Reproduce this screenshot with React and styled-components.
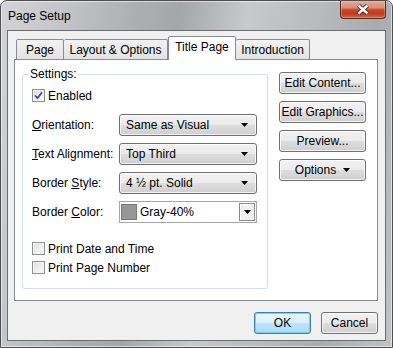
import React from "react";
import styled, { createGlobalStyle } from "styled-components";

const GlobalStyle = createGlobalStyle`
  html, body {
    margin: 0;
    padding: 0;
    background: #fff;
  }
  body {
    font-family: "Segoe UI", "Liberation Sans", Arial, sans-serif;
    font-size: 12px;
    color: #000;
  }
`;

const Window = styled.div`
  width: 393px;
  height: 348px;
  box-sizing: border-box;
  display: flex;
  flex-direction: column;
  padding: 0 6px 6px 6px;
  border: 1px solid #4e4e4e;
  border-radius: 7px 7px 0 0;
  box-shadow: inset 0 0 0 1px rgba(255, 255, 255, 0.55);
  background: linear-gradient(
    100deg,
    #d2d4d6 0%,
    #c3c5c8 14%,
    #adb0b3 30%,
    #a4a7aa 40%,
    #c7c9cb 55%,
    #b9bbbe 70%,
    #a9acaf 84%,
    #c0c2c4 100%
  );
`;

const TitleBar = styled.div`
  height: 29px;
  display: flex;
  justify-content: space-between;
  align-items: flex-start;
`;

const Title = styled.div`
  padding: 8px 0 0 1px;
  line-height: 14px;
  font-size: 12px;
  color: #000;
`;

const CloseButton = styled.div`
  width: 46px;
  height: 18px;
  margin-right: 0;
  box-sizing: border-box;
  display: flex;
  align-items: center;
  justify-content: center;
  border: 1px solid #5a2a22;
  border-top: none;
  border-radius: 0 0 4px 4px;
  background: linear-gradient(
    #e7a997 0%,
    #d88c78 40%,
    #c5472b 52%,
    #c23a1e 75%,
    #d3694c 100%
  );
  box-shadow: inset 0 0 0 1px rgba(255, 200, 180, 0.35);
`;

const Client = styled.div`
  flex: 1;
  display: flex;
  flex-direction: column;
  padding: 5px 7px 6px 6px;
  border: 1px solid #6e6e6e;
  background: #f0f0f0;
`;

const TabStrip = styled.div`
  height: 23px;
  display: flex;
  align-items: flex-end;
  padding-left: 2px;
`;

const Tab = styled.div`
  position: relative;
  z-index: ${(p) => (p.$active ? 2 : 1)};
  width: ${(p) => p.$width}px;
  height: ${(p) => (p.$active ? 24 : 20)}px;
  margin-bottom: ${(p) => (p.$active ? -1 : 0)}px;
  box-sizing: border-box;
  display: flex;
  align-items: center;
  justify-content: center;
  padding-bottom: ${(p) => (p.$active ? 3 : 0)}px;
  border: 1px solid #898c95;
  border-bottom: none;
  border-left-width: ${(p) => (p.$first || p.$active ? 1 : 0)}px;
  border-radius: 2px 2px 0 0;
  background: ${(p) =>
    p.$active ? "#fff" : "linear-gradient(#f2f2f2, #e3e3e3)"};
  white-space: nowrap;
`;

const Panel = styled.div`
  flex: 1;
  display: flex;
  align-items: flex-start;
  gap: 11px;
  padding: 7px 10px 0 7px;
  border: 1px solid #898c95;
  background: #fff;
`;

const Group = styled.fieldset`
  margin: 0;
  width: 246px;
  box-sizing: border-box;
  padding: 0 9px 13px 9px;
  border: 1px solid #d5dfe5;
  border-radius: 3px;
  display: flex;
  flex-direction: column;
`;

const Legend = styled.legend`
  padding: 0 1px;
  margin-left: -3px;
  line-height: 14px;
`;

const CheckRow = styled.label`
  display: flex;
  align-items: center;
  gap: 3px;
  height: 15px;
  margin-top: ${(p) => p.$top || 0}px;
`;

const Box = styled.span`
  width: 13px;
  height: 13px;
  box-sizing: border-box;
  border: 1px solid #8e8f8f;
  display: flex;
  align-items: center;
  justify-content: center;
  background: linear-gradient(135deg, #dcdcdc 0%, #f4f4f4 70%, #fafafa 100%);
  box-shadow: inset 0 0 0 1px #f4f4f4;
`;

const FieldRow = styled.div`
  display: flex;
  align-items: center;
  height: 22px;
  margin-top: ${(p) => p.$top}px;
`;

const FieldLabel = styled.span`
  width: 87px;
  white-space: nowrap;
`;

const Combo = styled.div`
  width: 138px;
  height: 22px;
  box-sizing: border-box;
  display: flex;
  align-items: center;
  justify-content: space-between;
  padding: 0 8px 0 6px;
  border: 1px solid #707070;
  border-radius: 3px;
  background: linear-gradient(#f2f2f2 0%, #ebebeb 48%, #dddddd 52%, #cfcfcf 100%);
  box-shadow: inset 0 0 0 1px rgba(255, 255, 255, 0.7);
`;

const ColorCombo = styled.div`
  width: 138px;
  height: 22px;
  box-sizing: border-box;
  display: flex;
  align-items: center;
  padding: 1px;
  border: 1px solid #a5a5a5;
  background: #fff;
`;

const Swatch = styled.span`
  width: 16px;
  height: 16px;
  box-sizing: border-box;
  margin-right: 3px;
  border: 1px solid #7a7a7a;
  background: ${(p) => p.$color};
`;

const ColorText = styled.span`
  flex: 1;
`;

const DropButton = styled.span`
  width: 16px;
  height: 18px;
  box-sizing: border-box;
  display: flex;
  align-items: center;
  justify-content: center;
  border: 1px solid #8a8a8a;
  background: #f0f0f0;
  box-shadow: inset 1px 1px 0 #fff;
`;

const SideColumn = styled.div`
  display: flex;
  flex-direction: column;
  gap: 7px;
  margin-top: 5px;
`;

const Button = styled.div`
  width: ${(p) => p.$width || 87}px;
  height: 22px;
  box-sizing: border-box;
  display: flex;
  align-items: center;
  justify-content: center;
  gap: 7px;
  border: 1px solid ${(p) => (p.$default ? "#3c7fb1" : "#707070")};
  border-radius: 3px;
  background: ${(p) =>
    p.$default
      ? "linear-gradient(#eaf6fd 0%, #d9f0fc 48%, #bee6fd 52%, #a7d9f5 100%)"
      : "linear-gradient(#f2f2f2 0%, #ebebeb 48%, #dddddd 52%, #cfcfcf 100%)"};
  box-shadow: inset 0 0 0 1px
    ${(p) => (p.$default ? "rgba(120, 200, 240, 0.9)" : "rgba(255, 255, 255, 0.75)")};
  white-space: nowrap;
`;

const ButtonRow = styled.div`
  display: flex;
  justify-content: flex-end;
  gap: 10px;
  margin-top: 11px;
`;

const Arrow = () => (
  <svg width="7" height="4" viewBox="0 0 7 4">
    <path d="M0 0H7L3.5 4Z" fill="#000" />
  </svg>
);

const Check = () => (
  <svg width="9" height="9" viewBox="0 0 9 9">
    <path
      d="M1 4.5L3.5 7.2L8 1.2"
      fill="none"
      stroke="#3153a3"
      strokeWidth="1.8"
      strokeLinejoin="round"
    />
  </svg>
);

const CloseX = () => (
  <svg width="14" height="11" viewBox="0 0 14 11">
    <path d="M2.5 1.5L11.5 9.5M11.5 1.5L2.5 9.5" stroke="#4a2018" strokeWidth="4.2" />
    <path d="M2.5 1.5L11.5 9.5M11.5 1.5L2.5 9.5" stroke="#fff" strokeWidth="2.4" />
  </svg>
);

const tabs = [
  { label: "Page", width: 48 },
  { label: "Layout & Options", width: 104 },
  { label: "Title Page", width: 68, active: true },
  { label: "Introduction", width: 74 },
];

const combos = [
  { pre: "", key: "O", post: "rientation:", value: "Same as Visual", top: 11 },
  { pre: "", key: "T", post: "ext Alignment:", value: "Top Third", top: 7 },
  { pre: "Border ", key: "S", post: "tyle:", value: "4 ½ pt. Solid", top: 7 },
];

const App = () => (
  <>
    <GlobalStyle />
    <Window>
      <TitleBar>
        <Title>Page Setup</Title>
        <CloseButton>
          <CloseX />
        </CloseButton>
      </TitleBar>
      <Client>
        <TabStrip>
          {tabs.map((t, i) => (
            <Tab key={t.label} $width={t.width} $active={t.active} $first={i === 0}>
              {t.label}
            </Tab>
          ))}
        </TabStrip>
        <Panel>
          <Group>
            <Legend>Settings:</Legend>
            <CheckRow $top={7}>
              <Box>
                <Check />
              </Box>
              Enabled
            </CheckRow>
            {combos.map((c) => (
              <FieldRow key={c.value} $top={c.top}>
                <FieldLabel>
                  {c.pre}
                  <u>{c.key}</u>
                  {c.post}
                </FieldLabel>
                <Combo>
                  <span>{c.value}</span>
                  <Arrow />
                </Combo>
              </FieldRow>
            ))}
            <FieldRow $top={7}>
              <FieldLabel>
                Border <u>C</u>olor:
              </FieldLabel>
              <ColorCombo>
                <Swatch $color="#979797" />
                <ColorText>Gray-40%</ColorText>
                <DropButton>
                  <Arrow />
                </DropButton>
              </ColorCombo>
            </FieldRow>
            <CheckRow $top={18}>
              <Box />
              Print Date and Time
            </CheckRow>
            <CheckRow $top={4}>
              <Box />
              Print Page Number
            </CheckRow>
          </Group>
          <SideColumn>
            <Button>Edit Content...</Button>
            <Button>Edit Graphics...</Button>
            <Button>Preview...</Button>
            <Button>
              Options
              <Arrow />
            </Button>
          </SideColumn>
        </Panel>
        <ButtonRow>
          <Button $width={57} $default>
            OK
          </Button>
          <Button $width={57}>Cancel</Button>
        </ButtonRow>
      </Client>
    </Window>
  </>
);

export default App;
